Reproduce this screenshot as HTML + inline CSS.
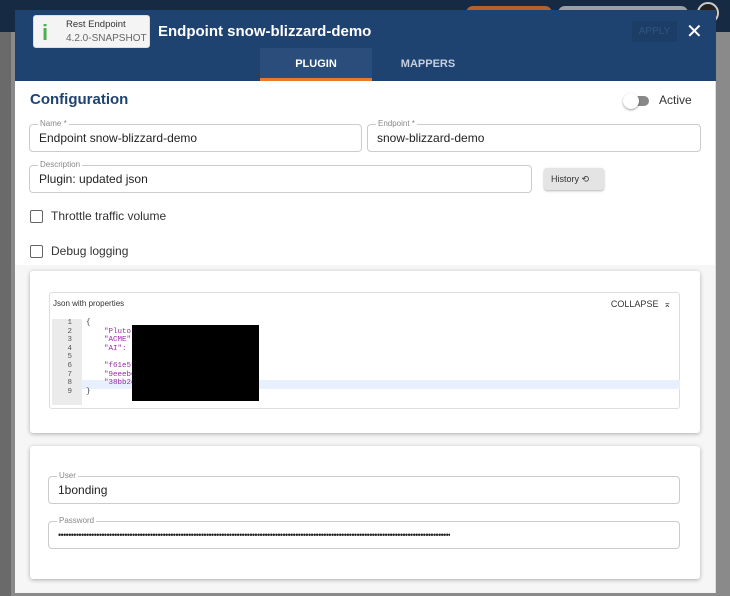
<!DOCTYPE html>
<html><head><meta charset="utf-8"><style>
*{box-sizing:border-box;margin:0;padding:0}
body{width:730px;height:596px;overflow:hidden;background:#8a8a8a;font-family:"Liberation Sans",sans-serif;position:relative}
.topbar{position:absolute;left:0;top:0;width:730px;height:32px;background:#172a44}
.pill1{position:absolute;left:466px;top:6px;width:86px;height:14px;background:#b5612e;border-radius:7px}
.pill2{position:absolute;left:558px;top:6px;width:130px;height:14px;background:#9aa0a8;border-radius:7px}
.avatar{position:absolute;left:697px;top:2px;width:22px;height:22px;border-radius:50%;background:#222;border:2px solid #ccc}
.leftstrip{position:absolute;left:0;top:32px;width:11px;height:564px;background:#6a6a6a}
.dlg{position:absolute;left:15px;top:10px;width:701px;height:583px;background:#fff;overflow:hidden}
.hdr{position:absolute;left:0;top:0;width:701px;height:71px;background:#1f4371}
.badge{position:absolute;left:18px;top:5px;width:117px;height:33px;background:#f4f4f4;border-radius:3px;border:1px solid #ddd;white-space:nowrap}
.badge .i{position:absolute;left:8px;top:4px;color:#4caf50;font-size:22px;font-weight:bold}
.badge .t1{position:absolute;left:32px;top:3px;font-size:9.5px;color:#333}
.badge .t2{position:absolute;left:32px;top:17px;font-size:10px;color:#666}
.title{position:absolute;left:143px;top:13px;color:#fff;font-size:15px;font-weight:bold}
.apply{position:absolute;left:617px;top:11px;width:45px;height:21px;background:#1c3d66;color:#2e5585;font-size:10px;text-align:center;line-height:21px}
.close{position:absolute;left:671px;top:9px;color:#fff;font-size:20px}
.tab{position:absolute;top:38px;height:33px;width:112px;text-align:center;line-height:33px;font-size:11px;font-weight:bold;color:#c5cfdd}
.tab.on{left:245px;background:#2a4d7b;color:#fff;border-bottom:3px solid #e87a2e}
.content{position:absolute;left:0;top:71px;width:700px;height:512px}
.sb{position:absolute;left:700px;top:71px;width:11px;height:512px;background:#f0f0f0;border-left:1px solid #ddd}
.cfg{position:absolute;left:15px;top:10px;font-size:15px;font-weight:bold;color:#1f4371}
.tog{position:absolute;left:610px;top:15px;width:24px;height:10px;border-radius:5px;background:#888}
.tog:before{content:"";position:absolute;left:-2px;top:-3px;width:16px;height:16px;border-radius:50%;background:#fff;box-shadow:0 1px 2px rgba(0,0,0,.4)}
.act{position:absolute;left:644px;top:12px;font-size:12px;color:#333}
.fld{position:absolute;border:1px solid #ccc;border-radius:4px;font-size:12px;color:#222;padding:0 9px}
.fld .lb{position:absolute;left:8px;top:-6px;background:#fff;font-size:8px;color:#888;padding:0 2px}
.fld .v{line-height:27px}
.cb{position:absolute;left:15px;width:13px;height:13px;border:1.5px solid #666;border-radius:2px}
.cbl{position:absolute;left:36px;font-size:12px;color:#333}
.hist{position:absolute;left:529px;top:87px;width:60px;height:22px;background:#e4e4e4;border-radius:3px;box-shadow:0 1px 2px rgba(0,0,0,.3);font-size:9px;color:#333;line-height:22px;padding-left:7px}
.gray{position:absolute;left:0;top:184px;width:700px;height:340px;background:#f6f6f6}
.card{position:absolute;left:15px;width:670px;background:#fff;border-radius:3px;box-shadow:0 1px 4px rgba(0,0,0,.3)}
.json{position:absolute;left:19px;top:21px;width:631px;height:117px;border:1px solid #ddd;border-radius:3px}
.code{position:absolute;left:2px;top:26px;width:628px;font-family:"Liberation Mono",monospace;font-size:7.5px;line-height:8.6px}
.gut{position:absolute;left:0;top:0;width:30px;height:86px;background:#ebebeb;color:#555;text-align:right;padding-right:10px}
.lns{position:absolute;left:34px;top:0;color:#9a2aa8;white-space:pre}
.pw{width:392px;overflow:hidden;white-space:nowrap;font-size:9px;letter-spacing:-0.6px;line-height:27px}
</style></head><body>
<div class="topbar"><div class="pill1"></div><div class="pill2"></div><div class="avatar"></div></div>
<div class="leftstrip"></div>
<div class="dlg">
 <div class="hdr">
  <div class="badge"><span class="i">i</span><span class="t1">Rest Endpoint</span><span class="t2">4.2.0-SNAPSHOT</span></div>
  <div class="title">Endpoint snow-blizzard-demo</div>
  <div class="apply">APPLY</div><div class="close">✕</div>
  <div class="tab on">PLUGIN</div><div class="tab" style="left:357px">MAPPERS</div>
 </div>
 <div class="content">
  <div class="cfg">Configuration</div>
  <div class="tog"></div><div class="act">Active</div>
  <div class="fld" style="left:14px;top:43px;width:333px;height:28px"><span class="lb">Name *</span><div class="v">Endpoint snow-blizzard-demo</div></div>
  <div class="fld" style="left:352px;top:43px;width:334px;height:28px"><span class="lb">Endpoint *</span><div class="v">snow-blizzard-demo</div></div>
  <div class="fld" style="left:14px;top:84px;width:503px;height:28px"><span class="lb">Description</span><div class="v">Plugin: updated json</div></div>
  <div class="hist">History ⟲</div>
  <div class="cb" style="top:129px"></div><div class="cbl" style="top:128px">Throttle traffic volume</div>
  <div class="cb" style="top:164px"></div><div class="cbl" style="top:163px">Debug logging</div>
  <div class="gray">
   <div class="card" style="top:6px;height:162px">
    <div class="json">
     <div style="position:absolute;left:3px;top:6px;font-size:8px;color:#333">Json with properties</div>
     <div style="position:absolute;right:8px;top:6px;font-size:9px;color:#333">COLLAPSE &nbsp;⌅</div>
     <div class="code">
      <div style="position:absolute;left:0;top:61px;width:628px;height:9px;background:#e8f0fe"></div>
      <div class="gut">1<br>2<br>3<br>4<br>5<br>6<br>7<br>8<br>9</div>
      <div class="lns"><span style="color:#333">{</span>
    "Pluto"
    "ACME":
    "AI": "

    "f61e5f
    "9eeeb6
    "38bb2c
<span style="color:#333">}</span></div>
      <div style="position:absolute;left:80px;top:6px;width:127px;height:76px;background:#000"></div>
     </div>
    </div>
   </div>
   <div class="card" style="top:181px;height:133px">
    <div class="fld" style="left:18px;top:30px;width:632px;height:28px"><span class="lb">User</span><div class="v">1bonding</div></div>
    <div class="fld" style="left:18px;top:75px;width:632px;height:28px"><span class="lb">Password</span><div class="pw">••••••••••••••••••••••••••••••••••••••••••••••••••••••••••••••••••••••••••••••••••••••••••••••••••••••••••••••••••••••••••••••••••••••••••••••••••••••••••••••••••••••••••••••••••••••••••••••••••••</div></div>
   </div>
  </div>
 </div>
 <div class="sb"></div>
</div>
</body></html>
